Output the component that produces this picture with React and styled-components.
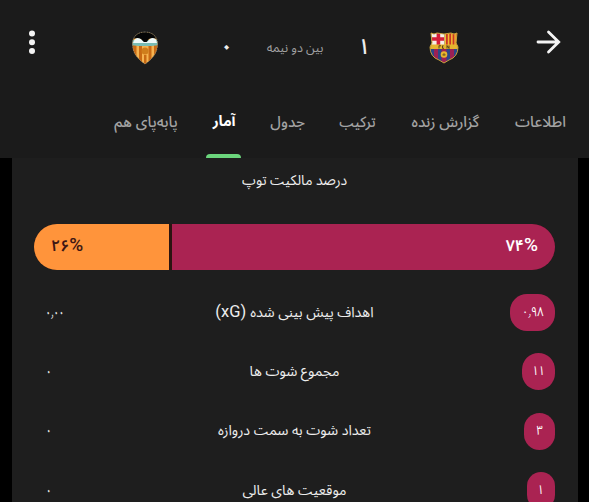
import React from "react";
import styled, { createGlobalStyle } from "styled-components";

const Global = createGlobalStyle`
  * { box-sizing: border-box; }
  body { margin: 0; background: #000; overflow: hidden; }
`;

const Screen = styled.div`
  width: 589px;
  height: 502px;
  overflow: hidden;
  background: #000;
  color: #eee;
  font-family: Roboto, "Noto Sans Arabic", "DejaVu Sans", sans-serif;
`;
const Header = styled.header`
  height: 158px;
  background: #1b1b1b;
`;
const TopBar = styled.div`
  height: 96px;
  display: grid;
  grid-template-columns: 64px 162px 1px 136px 2px 158px 50px;
  align-items: center;
`;
const Cell = styled.div`
  display: flex;
  justify-content: center;
  align-items: center;
  height: 30px;
  padding-bottom: ${(p) => p.$lift || 0}px;
`;
const Text = styled.span`
  display: block;
  flex: none;
  white-space: nowrap;
  direction: ${(p) => (p.$ltr ? "ltr" : "rtl")};
  font-size: ${(p) => p.$size || 14.2}px;
  font-weight: ${(p) => p.$weight || 400};
  color: ${(p) => p.$color || "#ededed"};
  line-height: 20px;
  transform: scaleX(${(p) => p.$fit || 1});
`;
const Latin = styled.span`
  font-size: 16.5px;
  line-height: 1;
`;
const Percent = styled.span`
  font-size: 19px;
  font-weight: 500;
  line-height: 1;
`;
const Tabs = styled.nav`
  height: 62px;
  display: grid;
  grid-template-columns: 64px 23px 35px 36px 70px 51px;
  column-gap: 34.6px;
  padding-left: 114px;
`;
const Tab = styled.div`
  display: flex;
  justify-content: center;
  height: 62px;
  padding-top: 16px;
  position: relative;
`;
const Indicator = styled.i`
  position: absolute;
  bottom: 0;
  left: 50%;
  width: 35px;
  height: 4px;
  margin-left: -18px;
  border-radius: 4px 4px 0 0;
  background: #6bd57c;
`;
const Panel = styled.main`
  margin: 0 11px 0 12px;
  height: 344px;
  padding: 12px 23px 0 22px;
  background: #1e1e1e;
`;
const Title = styled.div`
  height: 54px;
  display: flex;
  justify-content: center;
`;
const Bar = styled.div`
  display: grid;
  grid-template-columns: 135px 1fr;
  gap: 3px;
  height: 46px;
  border-radius: 23px;
  overflow: hidden;
  background: #2c1411;
`;
const Share = styled.div`
  display: flex;
  align-items: center;
  justify-content: ${(p) => (p.$end ? "flex-end" : "flex-start")};
  padding: 0 17px 3px;
  background: ${(p) => p.$color};
`;
const Stats = styled.div`
  padding-top: 13px;
`;
const Row = styled.div`
  display: grid;
  grid-template-columns: 42px 1fr 42px;
  height: 59.3px;
  align-items: center;
`;
const Value = styled.div`
  display: flex;
  justify-content: ${(p) => (p.$wide ? "center" : "flex-start")};
  padding-left: ${(p) => (p.$wide ? 0 : 11)}px;
`;
const Label = styled.div`
  display: flex;
  justify-content: center;
  padding-bottom: 2px;
`;
const Badge = styled.div`
  justify-self: end;
  display: flex;
  align-items: center;
  justify-content: center;
  width: ${(p) => p.$w}px;
  height: 37px;
  padding-bottom: 1px;
  border-radius: 17px;
  background: #aa2352;
`;

const tabs = [
  { text: "پابه‌پای هم" },
  { text: "آمار", active: true },
  { text: "جدول" },
  { text: "ترکیب", fit: 0.93 },
  { text: "گزارش زنده" },
  { text: "اطلاعات" },
];
const rows = [
  { label: "اهداف پیش بینی شده", latin: "(xG)", away: "۰٫۰۰", home: "۰٫۹۸", w: 45 },
  { label: "مجموع شوت ها", away: "۰", home: "۱۱", w: 33 },
  { label: "تعداد شوت به سمت دروازه", away: "۰", home: "۳", w: 31 },
  { label: "موقعیت های عالی", away: "۰", home: "۱", w: 28 },
];

const MenuIcon = () => (
  <svg width="8" height="26" viewBox="0 0 8 26" fill="#f4f4f4">
    <circle cx="4" cy="3.5" r="3" /><circle cx="4" cy="12.3" r="3" /><circle cx="4" cy="21" r="3" />
  </svg>
);
const ArrowIcon = () => (
  <svg width="26" height="26" viewBox="0 0 26 26" fill="none" stroke="#f4f4f4" strokeWidth="2.8">
    <path d="M3 12H23.5M13.5 2L23.7 12L13.5 22" strokeLinecap="round" strokeLinejoin="miter" />
  </svg>
);
const ValenciaCrest = () => (
  <svg width="28" height="36" viewBox="0 0 28 36">
    <defs><clipPath id="vc"><path d="M14 2C6 2 1.5 7 1.5 14C1.5 24 8 30 14 34C20 30 26.5 24 26.5 14C26.5 7 22 2 14 2Z" /></clipPath></defs>
    <g clipPath="url(#vc)">
      <rect width="28" height="36" fill="#f6b350" />
      <path d="M2 14h3.5v20H2zM8 14h3v20H8zM13 25h2.5v9H13zM17.5 14h3v20h-3zM23 14h4v20h-4z" fill="#c86a14" />
      <path d="M0 10H28V15Q14 17 0 15Z" fill="#78bdb5" />
      <path d="M2 13Q4 7 9 8L13 12H16L20 8Q25 7 26 13Z" fill="#eef9f8" />
      <path d="M0 0H28V11Q23 6 18 9L15.5 12H13L10 9Q5 6 0 11Z" fill="#050505" />
      <circle cx="14" cy="21" r="3.5" fill="#cf7e1c" />
    </g>
    <path d="M14 2C6 2 1.5 7 1.5 14C1.5 24 8 30 14 34C20 30 26.5 24 26.5 14C26.5 7 22 2 14 2Z" fill="none" stroke="#8f8876" strokeWidth=".7" strokeDasharray="1.5 1" />
  </svg>
);
const BarcelonaCrest = () => (
  <svg width="30" height="32" viewBox="0 0 30 32">
    <defs><clipPath id="bc"><path d="M2 1Q5 3 8 1Q15 3 22 1Q25 3 28 1L27 11L29 15Q29 25 20 28L15 31L10 28Q1 25 1 15L3 11Z" /></clipPath></defs>
    <g clipPath="url(#bc)">
      <rect width="30" height="32" fill="#2c4788" />
      <rect width="15.5" height="14" fill="#f5eee7" />
      <path d="M7.6 1h3.6v4.2H15v3.5h-3.8V13H7.6V8.7H3V5.2h4.6z" fill="#d51d38" />
      <rect x="15.5" width="15" height="14" fill="#f5bd32" />
      <path d="M17 0h1.8v14H17zM20.3 0h1.8v14h-1.8zM23.6 0h1.8v14h-1.8zM26.8 0h1.8v14h-1.8z" fill="#c83525" />
      <path d="M5 17h4v14H5zM12.5 17h5v14h-5zM21 17h4v14h-4z" fill="#9c2155" />
      <rect y="12.5" width="30" height="4.5" fill="#e5b42f" />
      <path d="M10 13.5v3M10 13.8h2M14.5 13.8h-1v2.5h1.5M18 16.5v-3l2 3v-3" stroke="#58441d" fill="none" />
      <circle cx="15" cy="22.5" r="3.3" fill="#e8b72d" />
      <path d="M13 23l2-2 2 2-2 1z" fill="#8a671e" />
    </g>
    <path d="M2 1Q5 3 8 1Q15 3 22 1Q25 3 28 1L27 11L29 15Q29 25 20 28L15 31L10 28Q1 25 1 15L3 11Z" fill="none" stroke="#c79f38" strokeWidth="1" />
  </svg>
);

export default function App() {
  return (
    <Screen>
      <Global />
      <Header>
        <TopBar>
          <Cell $lift={10}><MenuIcon /></Cell>
          <Cell><ValenciaCrest /></Cell>
          <Cell $lift={2}><Text $size={22} $weight={700}>۰</Text></Cell>
          <Cell $lift={1}><Text $size={12.6} $color="#a0a0a0">بین دو نیمه</Text></Cell>
          <Cell $lift={3}><Text $size={22} $weight={500}>۱</Text></Cell>
          <Cell><BarcelonaCrest /></Cell>
          <Cell $lift={10}><ArrowIcon /></Cell>
        </TopBar>
        <Tabs>
          {tabs.map((t) => (
            <Tab key={t.text}>
              <Text $size={t.active ? 14.5 : 15} $weight={t.active ? 700 : 500} $color={t.active ? "#fff" : "#a3a3a3"} $fit={t.fit}>{t.text}</Text>
              {t.active && <Indicator />}
            </Tab>
          ))}
        </Tabs>
      </Header>
      <Panel>
        <Title><Text $fit={0.98}>درصد مالکیت توپ</Text></Title>
        <Bar>
          <Share $color="#ff943b"><Text $ltr $size={16} $weight={600} $color="#3d1714">۲۶<Percent>%</Percent></Text></Share>
          <Share $end $color="#aa2352"><Text $ltr $size={16} $weight={600} $color="#fff">۷۴<Percent>%</Percent></Text></Share>
        </Bar>
        <Stats>
          {rows.map((r) => (
            <Row key={r.label}>
              <Value $wide={r.away.length > 1}><Text $ltr $size={13} $weight={600} $fit={0.72}>{r.away}</Text></Value>
              <Label><Text>{r.label}{r.latin && <Latin> {r.latin}</Latin>}</Text></Label>
              <Badge $w={r.w}><Text $ltr $size={13} $color="#fff" $fit={0.84}>{r.home}</Text></Badge>
            </Row>
          ))}
        </Stats>
      </Panel>
    </Screen>
  );
}
